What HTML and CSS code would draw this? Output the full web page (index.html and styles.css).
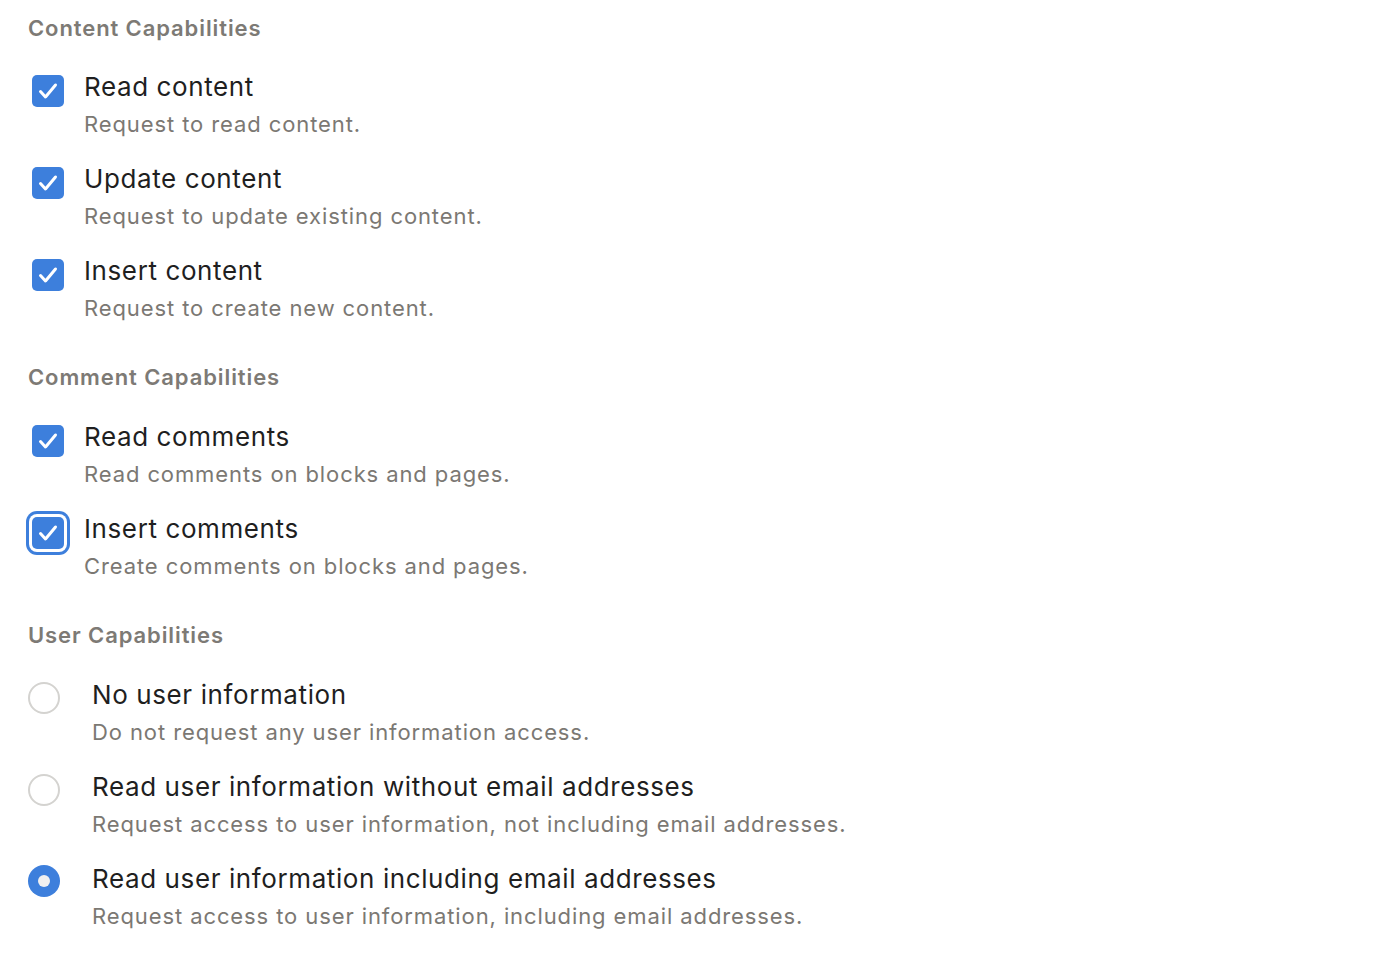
FILE: index.html
```html
<!DOCTYPE html>
<html lang="en">
<head>
    <meta charset="UTF-8">
    <title>Capabilities</title>
    <link rel="stylesheet" href="styles.css">
</head>
<body>
    <main class="capabilities">

        <section class="group">
            <h2 class="group-title">Content Capabilities</h2>
            <label class="option">
                <span class="check checked"><svg viewBox="0 0 32 32"><path d="M8.5 16.5l5 5.5L23.5 10"/></svg></span>
                <span class="option-text">
                    <span class="option-title">Read content</span>
                    <span class="option-desc">Request to read content.</span>
                </span>
            </label>
            <label class="option">
                <span class="check checked"><svg viewBox="0 0 32 32"><path d="M8.5 16.5l5 5.5L23.5 10"/></svg></span>
                <span class="option-text">
                    <span class="option-title">Update content</span>
                    <span class="option-desc">Request to update existing content.</span>
                </span>
            </label>
            <label class="option">
                <span class="check checked"><svg viewBox="0 0 32 32"><path d="M8.5 16.5l5 5.5L23.5 10"/></svg></span>
                <span class="option-text">
                    <span class="option-title">Insert content</span>
                    <span class="option-desc">Request to create new content.</span>
                </span>
            </label>
        </section>

        <section class="group">
            <h2 class="group-title">Comment Capabilities</h2>
            <label class="option">
                <span class="check checked"><svg viewBox="0 0 32 32"><path d="M8.5 16.5l5 5.5L23.5 10"/></svg></span>
                <span class="option-text">
                    <span class="option-title">Read comments</span>
                    <span class="option-desc">Read comments on blocks and pages.</span>
                </span>
            </label>
            <label class="option">
                <span class="check checked focused"><svg viewBox="0 0 32 32"><path d="M8.5 16.5l5 5.5L23.5 10"/></svg></span>
                <span class="option-text">
                    <span class="option-title">Insert comments</span>
                    <span class="option-desc">Create comments on blocks and pages.</span>
                </span>
            </label>
        </section>

        <section class="group">
            <h2 class="group-title">User Capabilities</h2>
            <label class="option radio-option">
                <span class="radio"></span>
                <span class="option-text">
                    <span class="option-title">No user information</span>
                    <span class="option-desc">Do not request any user information access.</span>
                </span>
            </label>
            <label class="option radio-option">
                <span class="radio"></span>
                <span class="option-text">
                    <span class="option-title">Read user information without email addresses</span>
                    <span class="option-desc">Request access to user information, not including email addresses.</span>
                </span>
            </label>
            <label class="option radio-option">
                <span class="radio selected"></span>
                <span class="option-text">
                    <span class="option-title">Read user information including email addresses</span>
                    <span class="option-desc">Request access to user information, including email addresses.</span>
                </span>
            </label>
        </section>

    </main>
</body>
</html>
```

FILE: styles.css
```css
body {
    margin: 0;
    padding: 0;
    background-color: #fff;
    font-family: 'Inter', 'Noto Sans', sans-serif;
    -webkit-font-smoothing: antialiased;
}

.capabilities {
    padding: 14px 28px;
}

.group {
    margin-bottom: 27px;
}

.group-title {
    margin: 0 0 18px 0;
    font-size: 22px;
    font-weight: 600;
    line-height: 28px;
    letter-spacing: 0.9px;
    color: #7d7a75;
}

.group + .group .group-title {
    margin-bottom: 19px;
}

.option {
    display: flex;
    align-items: flex-start;
    gap: 20px;
    padding: 10px 0;
    height: 72px;
}

.option-text {
    display: flex;
    flex-direction: column;
}

.option-title {
    font-size: 26px;
    line-height: 34px;
    letter-spacing: 0.6px;
    color: #1f1f1f;
}

.option-desc {
    font-size: 22px;
    line-height: 40px;
    letter-spacing: 0.9px;
    color: #7b7873;
}

/* checkbox */
.check {
    width: 32px;
    height: 32px;
    margin: 5px 0 0 4px;
    border-radius: 5px;
    background-color: #3d7fdc;
    display: flex;
    align-items: center;
    justify-content: center;
    flex-shrink: 0;
}

.check svg {
    width: 32px;
    height: 32px;
    fill: none;
    stroke: #fff;
    stroke-width: 3;
    stroke-linecap: round;
    stroke-linejoin: round;
}

.check.focused {
    box-shadow: 0 0 0 3px #fff, 0 0 0 6px #3d7fdc;
}

/* radio */
.radio-option {
    gap: 32px;
}

.radio-option:first-of-type {
    margin-top: 1px;
}

.radio {
    width: 28px;
    height: 28px;
    margin-top: 4px;
    border: 2px solid #d4d3d0;
    border-radius: 50%;
    flex-shrink: 0;
    box-sizing: content-box;
}

.radio.selected {
    border: none;
    width: 32px;
    height: 32px;
    margin-top: 3px;
    background-color: #3d7fdc;
    display: flex;
    align-items: center;
    justify-content: center;
}

.radio.selected::after {
    content: "";
    width: 12px;
    height: 12px;
    border-radius: 50%;
    background-color: #f0f0f0;
}
```
